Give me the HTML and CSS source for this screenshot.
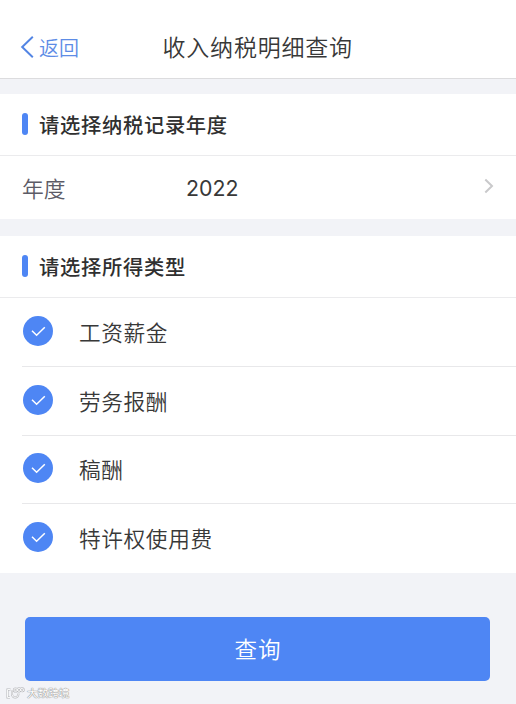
FILE: index.html
```html
<!DOCTYPE html>
<html lang="zh-CN">
<head>
<meta charset="utf-8">
<title>收入纳税明细查询</title>
<link rel="stylesheet" href="styles.css">
</head>
<body>
<header class="navbar">
  <a class="back">
    <svg class="back-icon" width="14" height="24" viewBox="0 0 14 24"><path d="M12.8 1.8 2.2 12l10.6 10.2"/></svg>
    <span>返回</span>
  </a>
  <h1 class="title">收入纳税明细查询</h1>
</header>
<main>
  <section class="card">
    <h2 class="heading">请选择纳税记录年度</h2>
    <div class="year-row">
      <span class="label">年度</span>
      <span class="value">2022</span>
      <svg class="chevron" width="12" height="18" viewBox="0 0 12 18"><path d="m2.3 2.5 6.7 6.5-6.7 6.5"/></svg>
    </div>
  </section>
  <section class="card">
    <h2 class="heading">请选择所得类型</h2>
    <ul class="types">
      <li class="type"><svg class="check" width="30" height="30" viewBox="0 0 30 30"><circle cx="15" cy="15" r="15"/><path d="m9 14.8 4.6 4.5 8.2-8"/></svg><span>工资薪金</span></li>
      <li class="type"><svg class="check" width="30" height="30" viewBox="0 0 30 30"><circle cx="15" cy="15" r="15"/><path d="m9 14.8 4.6 4.5 8.2-8"/></svg><span>劳务报酬</span></li>
      <li class="type"><svg class="check" width="30" height="30" viewBox="0 0 30 30"><circle cx="15" cy="15" r="15"/><path d="m9 14.8 4.6 4.5 8.2-8"/></svg><span>稿酬</span></li>
      <li class="type"><svg class="check" width="30" height="30" viewBox="0 0 30 30"><circle cx="15" cy="15" r="15"/><path d="m9 14.8 4.6 4.5 8.2-8"/></svg><span>特许权使用费</span></li>
    </ul>
  </section>
  <button class="submit" type="button">查询</button>
</main>
<div class="watermark">
  <svg width="19" height="13" viewBox="0 0 19 13"><g class="mark-edge"><path d="M4.5 2.5H1.5v8H4M6 3.5v3.8a3.2 3.2 0 0 0 6.4 0V6.5"/><circle cx="9.5" cy="3" r="1.6"/><circle cx="13" cy="2.8" r="1.6"/><circle cx="16.2" cy="2.8" r="1.5"/></g><g class="mark-fill"><path d="M4.5 2.5H1.5v8H4M6 3.5v3.8a3.2 3.2 0 0 0 6.4 0V6.5"/><circle cx="9.5" cy="3" r="1.6"/><circle cx="13" cy="2.8" r="1.6"/><circle cx="16.2" cy="2.8" r="1.5"/></g></svg>
  <span>大数跨境</span>
</div>
</body>
</html>
```

FILE: styles.css
```css
* {
  box-sizing: border-box;
}

body {
  margin: 0;
  height: 704px;
  overflow: hidden;
  background: #f2f3f7;
  color: #383838;
  font-family: "Noto Sans CJK SC", sans-serif;
}

.navbar {
  display: grid;
  grid-template-columns: 162.5px 1fr;
  align-items: center;
  height: 79px;
  padding-top: 16px;
  background: #fff;
  border-bottom: 1px solid #dcdcde;
}

.back {
  display: flex;
  align-items: center;
  gap: 5px;
  padding-left: 20px;
  color: #5d8ce6;
  font-size: 20px;
  font-weight: 350;
  line-height: 30px;
}

.back span {
  padding-top: 1px;
}

.back-icon {
  fill: none;
  stroke: #5385e4;
  stroke-width: 2;
}

.title {
  margin: 0;
  padding-bottom: 2px;
  font-size: 23px;
  font-weight: 350;
  letter-spacing: 0.8px;
  line-height: 34px;
}

.card {
  margin-bottom: 17px;
  background: #fff;
}

.navbar + main {
  padding-top: 15px;
}

.heading {
  display: flex;
  align-items: center;
  gap: 11px;
  height: 62px;
  margin: 0;
  padding: 0 0 1px 22px;
  border-bottom: 1px solid #ebebed;
  color: #303030;
  font-size: 20.3px;
  font-weight: 500;
  letter-spacing: 0.7px;
  line-height: 32px;
}

.heading::before {
  content: "";
  width: 6px;
  height: 22px;
  border-radius: 3px;
  background: #4e86f4;
}

.year-row {
  display: grid;
  grid-template-columns: 164px 1fr auto;
  align-items: center;
  height: 63px;
  padding: 0 21px 1px 22px;
  font-size: 21.8px;
}

.label {
  color: #5c5b66;
  font-weight: 350;
}

.value {
  padding-top: 1px;
  font-family: Inter, sans-serif;
  font-size: 21.3px;
  font-weight: 400;
}

.chevron {
  margin-bottom: 2px;
  fill: none;
  stroke: #c9c9cb;
  stroke-width: 2;
}

.types {
  margin: 0;
  padding: 0 0 0 22px;
  list-style: none;
}

.type {
  display: flex;
  align-items: center;
  gap: 26px;
  height: 68.75px;
  padding: 0 0 2px 1px;
  border-bottom: 1px solid #e8e8ea;
  font-size: 21.7px;
  font-weight: 350;
  letter-spacing: 0.6px;
}

.type span {
  padding-top: 1px;
}

.type:last-child {
  padding-bottom: 3px;
  border-bottom: 0;
}

.check circle {
  fill: #4e86f4;
}

.check path {
  fill: none;
  stroke: #fff;
  stroke-width: 1.5;
}

.submit {
  display: block;
  width: 465px;
  height: 64px;
  margin: 44px 0 0 25.4px;
  padding: 0 0 2px;
  border: 0;
  border-radius: 5px;
  background: #4e86f4;
  color: #fff;
  font: 350 22.5px/60px "Noto Sans CJK SC", sans-serif;
  letter-spacing: 1px;
}

.watermark {
  position: absolute;
  left: 6px;
  bottom: 4px;
  display: flex;
  align-items: center;
  gap: 2px;
  color: #fff;
  font-size: 10.6px;
  line-height: 14px;
  text-shadow: 0 0 1px #888, 0 0 1px #999, 0 0 1px #999;
}

.mark-edge,
.mark-fill {
  fill: none;
  stroke: #b4b5b9;
  stroke-width: 2;
}

.mark-fill {
  stroke: #fff;
  stroke-width: 0.9;
}
```
